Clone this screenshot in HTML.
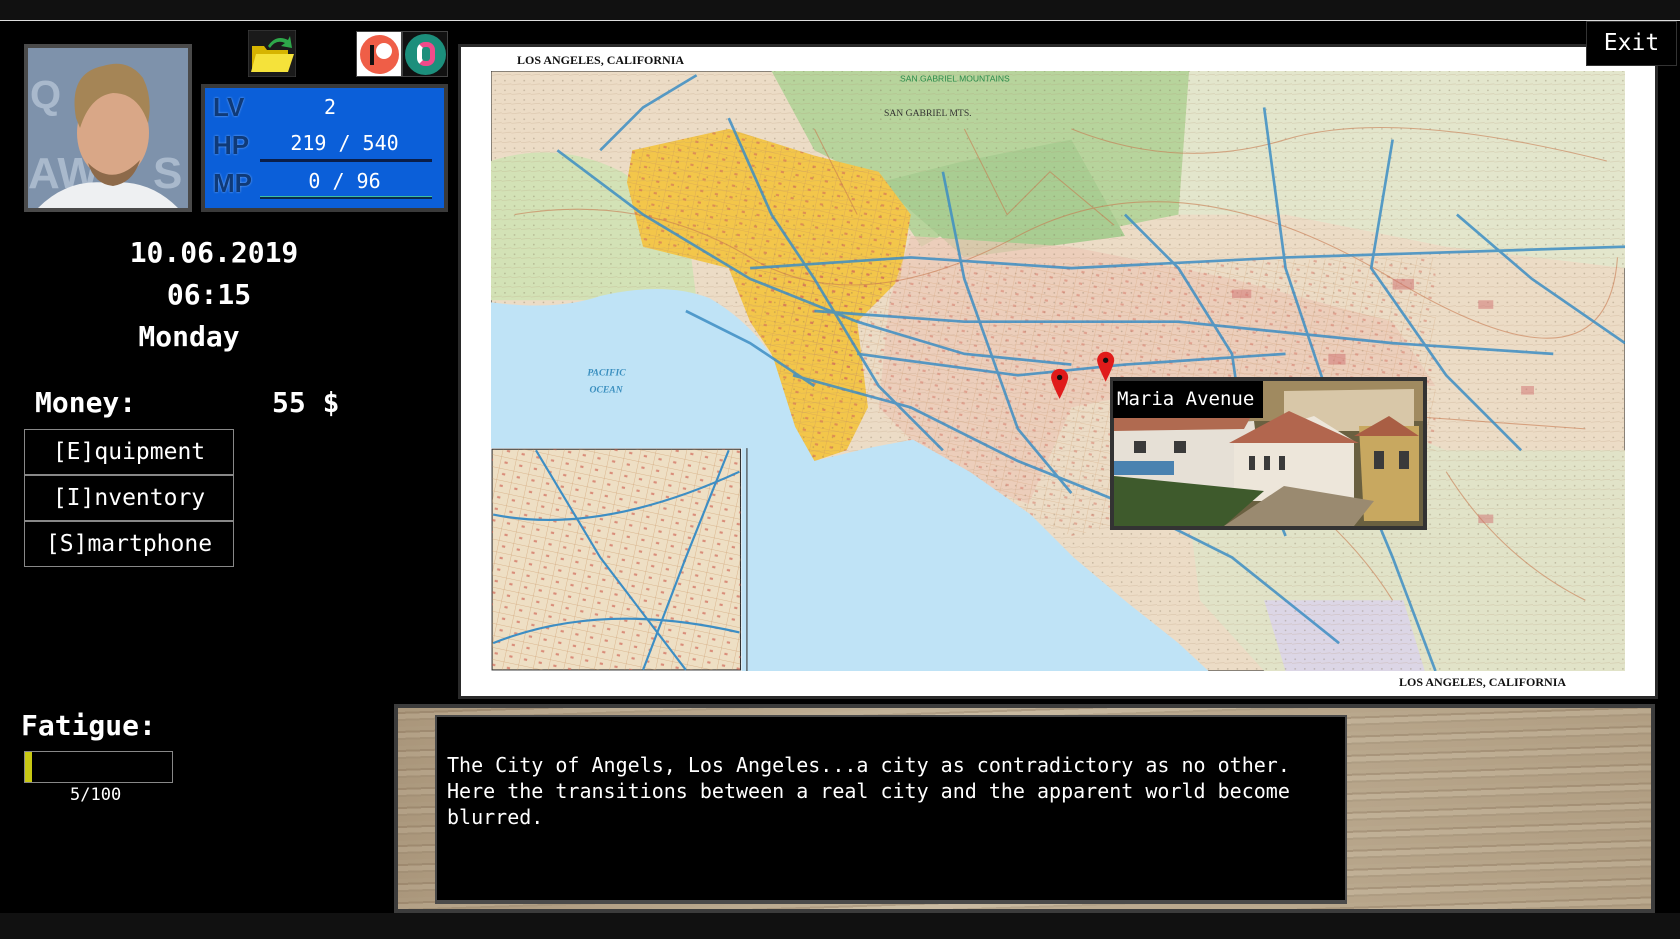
<!DOCTYPE html>
<html><head><meta charset="utf-8"><style>
*{margin:0;padding:0;box-sizing:border-box}
body{width:1680px;height:939px;background:#000;position:relative;overflow:hidden;font-family:"DejaVu Sans Mono","Liberation Mono",monospace;color:#fff}
.a{position:absolute}
.btn{position:absolute;left:24px;width:210px;height:46px;border:1px solid #888;font-size:23px;text-align:center;line-height:44px}
.big{font-size:28px;font-weight:bold}
.lbl{position:absolute;left:8px;font:bold 26px 'Liberation Sans',sans-serif;color:#0f3a78;text-shadow:0 0 2px #7fb4ff}
</style></head><body>
<div class="a" style="left:0;top:0;width:1680px;height:20px;background:#111"></div>
<div class="a" style="left:0;top:20px;width:1680px;height:1px;background:#ddd"></div>
<div class="a" style="left:0;top:913px;width:1680px;height:26px;background:#111"></div>

<div class="a" style="left:24px;top:44px;width:168px;height:168px;background:#4a4a4a;padding:4px">
<svg width="160" height="160" viewBox="0 0 160 160">
<rect width="160" height="160" fill="#7e92ab"/>
<text x="2" y="60" font-size="40" font-weight="bold" fill="#a9b9cc" font-family="Liberation Sans">Q</text>
<text x="0" y="140" font-size="44" font-weight="bold" fill="#a9b9cc" font-family="Liberation Sans">AW</text>
<text x="125" y="140" font-size="44" font-weight="bold" fill="#a9b9cc" font-family="Liberation Sans">S</text>
<path d="M10 160 Q40 130 80 135 Q120 130 150 160Z" fill="#eef0f2"/>
<ellipse cx="85" cy="85" rx="36" ry="46" fill="#d9a787"/>
<path d="M48 70 Q40 25 75 18 Q100 10 115 30 Q125 50 120 75 Q110 45 85 45 Q62 48 52 80Z" fill="#a58556"/>
<path d="M60 115 Q85 140 112 112 Q105 135 85 138 Q66 136 60 115Z" fill="#8d6a4a"/>
</svg></div>

<svg class="a" style="left:248px;top:30px" width="48" height="47" viewBox="0 0 48 47">
<rect width="48" height="47" fill="#1a1a1a" stroke="#444"/>
<path d="M4 16 L16 16 L19 20 L40 20 L40 42 L4 42Z" fill="#d6b400"/>
<path d="M8 24 L46 24 L40 42 L3 42Z" fill="#f5e23a"/>
<path d="M20 16 Q28 4 40 10 L42 6 L44 18 L33 16 L37 13 Q28 9 22 18Z" fill="#2ea84a"/>
</svg>
<div class="a" style="left:356px;top:31px;width:46px;height:46px;background:#fff;border:1px solid #444">
<div class="a" style="left:3px;top:3px;width:39px;height:39px;border-radius:50%;background:#ef5e47"></div>
<div class="a" style="left:13px;top:13px;width:4px;height:20px;background:#111"></div>
<div class="a" style="left:19px;top:11px;width:16px;height:16px;border-radius:50%;background:#fff"></div>
</div>
<div class="a" style="left:402px;top:31px;width:46px;height:46px;background:#111;border:1px solid #444">
<div class="a" style="left:2px;top:2px;width:41px;height:41px;border-radius:50%;background:#1c8f7c"></div>
<div class="a" style="left:14px;top:10px;width:18px;height:24px;border-radius:8px;border:5px solid #f04a8a;border-left-color:#fff"></div>
</div>

<div class="a" style="left:201px;top:84px;width:247px;height:128px;background:#3a3a3a;padding:4px">
<div style="position:relative;width:239px;height:120px;background:#0b5fd9">
<div class="lbl" style="top:4px">LV</div>
<div class="lbl" style="top:42px">HP</div>
<div class="lbl" style="top:80px">MP</div>
<div class="a" style="left:80px;width:90px;top:7px;font-size:20px;text-align:center">2</div>
<div class="a" style="left:52px;width:175px;top:43px;font-size:20px;text-align:center">219 / 540</div>
<div class="a" style="left:52px;width:175px;top:81px;font-size:20px;text-align:center">0 / 96</div>
<div class="a" style="left:55px;top:71px;width:172px;height:3px;background:#0a1e4a"></div>
<div class="a" style="left:55px;top:108px;width:172px;height:3px;background:#0a2a4a;border-top:1px solid #3fc0a0"></div>
</div></div>

<div class="a big" style="left:0;width:428px;top:236px;text-align:center">10.06.2019</div>
<div class="a big" style="left:0;width:418px;top:278px;text-align:center">06:15</div>
<div class="a big" style="left:0;width:378px;top:320px;text-align:center">Monday</div>
<div class="a big" style="left:35px;top:386px">Money:</div>
<div class="a big" style="left:272px;top:386px">55 $</div>
<div class="btn" style="top:429px">[E]quipment</div>
<div class="btn" style="top:475px">[I]nventory</div>
<div class="btn" style="top:521px">[S]martphone</div>
<div class="a big" style="left:21px;top:709px">Fatigue:</div>
<div class="a" style="left:24px;top:751px;width:149px;height:32px;border:1px solid #888"><div style="width:7px;height:30px;background:#c8c814"></div></div>
<div class="a" style="left:70px;top:785px;font-size:17px">5/100</div>

<div class="a" style="left:458px;top:44px;width:1200px;height:655px;background:#2a2a2a"></div>
<div class="a" style="left:461px;top:47px;width:1194px;height:649px;background:#fff"></div>
<div class="a" style="left:517px;top:53px;font:bold 12px 'Liberation Serif',serif;color:#111">LOS ANGELES, CALIFORNIA</div>
<div class="a" style="left:1399px;top:675px;font:bold 12px 'Liberation Serif',serif;color:#111">LOS ANGELES, CALIFORNIA</div>
<svg class="a" style="left:491px;top:71px" width="1134" height="600" viewBox="458 66 1059 560" preserveAspectRatio="none">
<defs>
<pattern id="st" width="14" height="11" patternUnits="userSpaceOnUse" patternTransform="rotate(12)">
<path d="M0 0 L14 0 M0 0 L0 11" stroke="#c8905e" stroke-width=".7" fill="none"/>
<rect x="4" y="4" width="3" height="2" fill="#d06a5a"/>
</pattern>
<pattern id="tx" width="9" height="9" patternUnits="userSpaceOnUse">
<circle cx="3" cy="3" r=".8" fill="#7a6a50"/><path d="M0 7 L9 6" stroke="#b09070" stroke-width=".5"/>
</pattern>
</defs>
<rect x="458" y="66" width="1059" height="560" fill="#ecdcc6" stroke="#333"/>
<path d="M458 150 Q520 130 580 160 L640 200 L650 280 L458 280Z" fill="#d3e2b6"/>
<path d="M720 66 L1110 66 L1100 200 L1000 220 L950 180 L860 230 L820 170 L760 140Z" fill="#b7d49c"/>
<path d="M820 170 L900 150 L1000 130 L1050 220 L900 240Z" fill="#a9cd92"/>
<path d="M1110 66 L1517 66 L1517 250 L1350 230 L1200 200 L1100 200Z" fill="#e3e6cc"/>
<path d="M1100 400 L1250 380 L1350 420 L1517 420 L1517 626 L1180 626 L1120 560Z" fill="#e1e3c8"/>
<path d="M1180 560 L1310 560 L1330 626 L1200 626Z" fill="#dcd6e6"/>
<path d="M590 140 L680 120 L760 145 L820 160 L850 200 L840 260 L800 300 L810 380 L790 420 L760 430 L740 400 L720 330 L700 300 L680 250 L600 230 L585 170Z" fill="#f3c64a"/>
<path d="M850 220 L1000 230 L1150 260 L1300 300 L1340 360 L1100 360 L1000 380 L960 470 L880 440 L820 380 L830 280Z" fill="#ecc7b6" opacity=".7"/>
<rect x="458" y="66" width="1059" height="560" fill="url(#tx)" opacity=".35"/>
<path d="M590 140 L680 120 L760 145 L820 160 L850 200 L840 260 L800 300 L810 380 L790 420 L760 430 L740 400 L720 330 L700 300 L680 250 L600 230 L585 170Z" fill="url(#st)" opacity=".6"/>
<path d="M700 250 L1340 240 L1340 420 L1000 500 L880 440 L760 330Z" fill="url(#st)" opacity=".45"/>
<path d="M458 282 Q520 290 560 276 Q620 262 662 278 Q700 300 722 335 L742 398 L760 430 L810 418 L852 410 L905 440 L962 480 L1002 520 L1052 562 L1100 600 L1128 626 L458 626Z" fill="#bfe3f6"/>
<g fill="none" stroke="#c87a50" stroke-width="1" opacity=".6">
<path d="M480 200 Q600 180 700 240 T950 220 T1300 260 T1510 240"/>
<path d="M1000 120 Q1100 160 1200 130 T1500 150"/>
<path d="M1150 420 Q1250 480 1300 560 M1350 440 Q1400 520 1480 560 M1200 380 L1480 400"/>
<path d="M900 120 L940 200 L980 160 L1040 210 M760 120 L800 200"/>
</g>
<g fill="none" stroke="#3d8ec4" stroke-width="2.5" opacity=".85">
<path d="M520 140 L600 200 L700 260 L800 300 L900 330 L1000 340"/>
<path d="M680 110 L720 200 L760 260 L820 360 L880 420"/>
<path d="M700 250 L850 240 L1000 250 L1200 240 L1517 230"/>
<path d="M760 290 L900 300 L1100 300 L1300 320 L1450 330"/>
<path d="M800 330 L950 350 L1050 340 L1200 330"/>
<path d="M880 160 L900 260 L950 400 L1000 460"/>
<path d="M1180 100 L1200 250 L1250 400 L1300 520 L1340 626"/>
<path d="M1300 130 L1280 250 L1350 350 L1420 420"/>
<path d="M740 350 L850 380 L950 430 L1050 470 L1150 520 L1250 600"/>
<path d="M560 140 L600 100 L650 70"/>
<path d="M1360 200 L1430 260 L1517 320"/>
<path d="M1050 200 L1100 250 L1150 330 L1160 400 L1200 500"/>
<path d="M640 290 L700 320 L760 360"/>
</g>
<g fill="#d07070" opacity=".5">
<rect x="1300" y="260" width="20" height="10"/><rect x="1380" y="280" width="14" height="8"/><rect x="1150" y="270" width="18" height="8"/>
<rect x="1240" y="330" width="16" height="10"/><rect x="1420" y="360" width="12" height="8"/><rect x="1380" y="480" width="14" height="8"/>
</g>
<text x="548" y="350" font-size="9" font-style="italic" font-weight="bold" fill="#3a8fbf" font-family="Liberation Serif">PACIFIC</text>
<text x="550" y="366" font-size="9" font-style="italic" font-weight="bold" fill="#3a8fbf" font-family="Liberation Serif">OCEAN</text>
<text x="840" y="76" font-size="8" fill="#2a8a4a" font-family="Liberation Sans">SAN GABRIEL MOUNTAINS</text>
<text x="825" y="108" font-size="9" fill="#333" font-family="Liberation Serif">SAN GABRIEL MTS.</text>
<rect x="458" y="418" width="234" height="208" fill="#fff"/>
<rect x="459" y="419" width="232" height="206" fill="#eedfc4" stroke="#333"/>
<rect x="459" y="419" width="232" height="206" fill="url(#st)" opacity=".7"/>
<g fill="none" stroke="#3d8ec4" stroke-width="2">
<path d="M460 480 Q560 500 690 440"/><path d="M500 420 L560 520 L640 625"/><path d="M460 600 Q560 560 690 590"/><path d="M680 420 L640 520 L600 625"/>
</g>
<line x1="697" y1="418" x2="697" y2="626" stroke="#333"/>
<path d="M989 372 Q981 356 981 352 A8 8 0 0 1 997 352 Q997 356 989 372Z" fill="#e01b1b"/><circle cx="989" cy="352" r="2.5" fill="#111"/>
<path d="M1032 356 Q1024 340 1024 336 A8 8 0 0 1 1040 336 Q1040 340 1032 356Z" fill="#e01b1b"/><circle cx="1032" cy="336" r="2.5" fill="#111"/>
</svg>

<div class="a" style="left:1110px;top:377px;width:317px;height:153px;background:#333;padding:4px">
<svg width="309" height="145" viewBox="0 0 309 145">
<rect width="309" height="145" fill="#6a6040"/>
<rect width="309" height="40" fill="#a08a60"/>
<path d="M170 10 L300 8 L300 50 L170 50Z" fill="#d8c7a8"/>
<path d="M0 45 L140 40 L150 120 L0 120Z" fill="#e6e0d6"/>
<path d="M0 35 L140 30 L130 48 L0 50Z" fill="#b06a50"/>
<path d="M120 60 L200 35 L240 60 L240 120 L120 120Z" fill="#ede6da"/>
<path d="M115 62 L175 30 L245 62Z" fill="#b2664e"/>
<path d="M245 45 L305 45 L305 140 L250 140Z" fill="#c8a860"/>
<path d="M240 55 L275 35 L305 55Z" fill="#a95e44"/>
<path d="M0 95 L150 110 L110 145 L0 145Z" fill="#3e5a2c"/>
<path d="M110 145 L170 105 L260 120 L240 145Z" fill="#9a8a70"/>
<rect x="0" y="80" width="60" height="14" fill="#4a82b0"/>
<g fill="#3a3a3a"><rect x="135" y="75" width="6" height="14"/><rect x="150" y="75" width="6" height="14"/><rect x="165" y="75" width="6" height="14"/><rect x="260" y="70" width="10" height="18"/><rect x="285" y="70" width="10" height="18"/><rect x="20" y="60" width="12" height="12"/><rect x="60" y="60" width="12" height="12"/></g>
</svg></div>
<div class="a" style="left:1113px;top:381px;width:150px;height:37px;background:#000;font-size:19px;line-height:37px;padding-left:4px">Maria Avenue</div>

<div class="a" style="left:1586px;top:21px;width:91px;height:45px;background:#000;border:1px solid #333;font-size:23px;text-align:center;line-height:43px">Exit</div>

<div class="a" style="left:394px;top:704px;width:1261px;height:209px;background:#3c3c3c;padding:4px">
<div style="width:100%;height:100%;background:linear-gradient(90deg,rgba(120,95,70,.25),rgba(255,255,255,.08) 40%,rgba(120,95,70,.15)),repeating-linear-gradient(178deg,#bdac90 0 4px,#aa977c 4px 6px,#c6b69b 6px 11px,#b1a085 11px 13px,#bba98d 13px 19px)"></div></div>
<div class="a" style="left:435px;top:715px;width:912px;height:189px;background:#000;border:2px solid #4a4a4a;border-bottom-width:4px"></div>
<div class="a" style="left:447px;top:752px;font-size:20px;line-height:26px;white-space:pre">The City of Angels, Los Angeles...a city as contradictory as no other.
Here the transitions between a real city and the apparent world become
blurred.</div>
</body></html>
